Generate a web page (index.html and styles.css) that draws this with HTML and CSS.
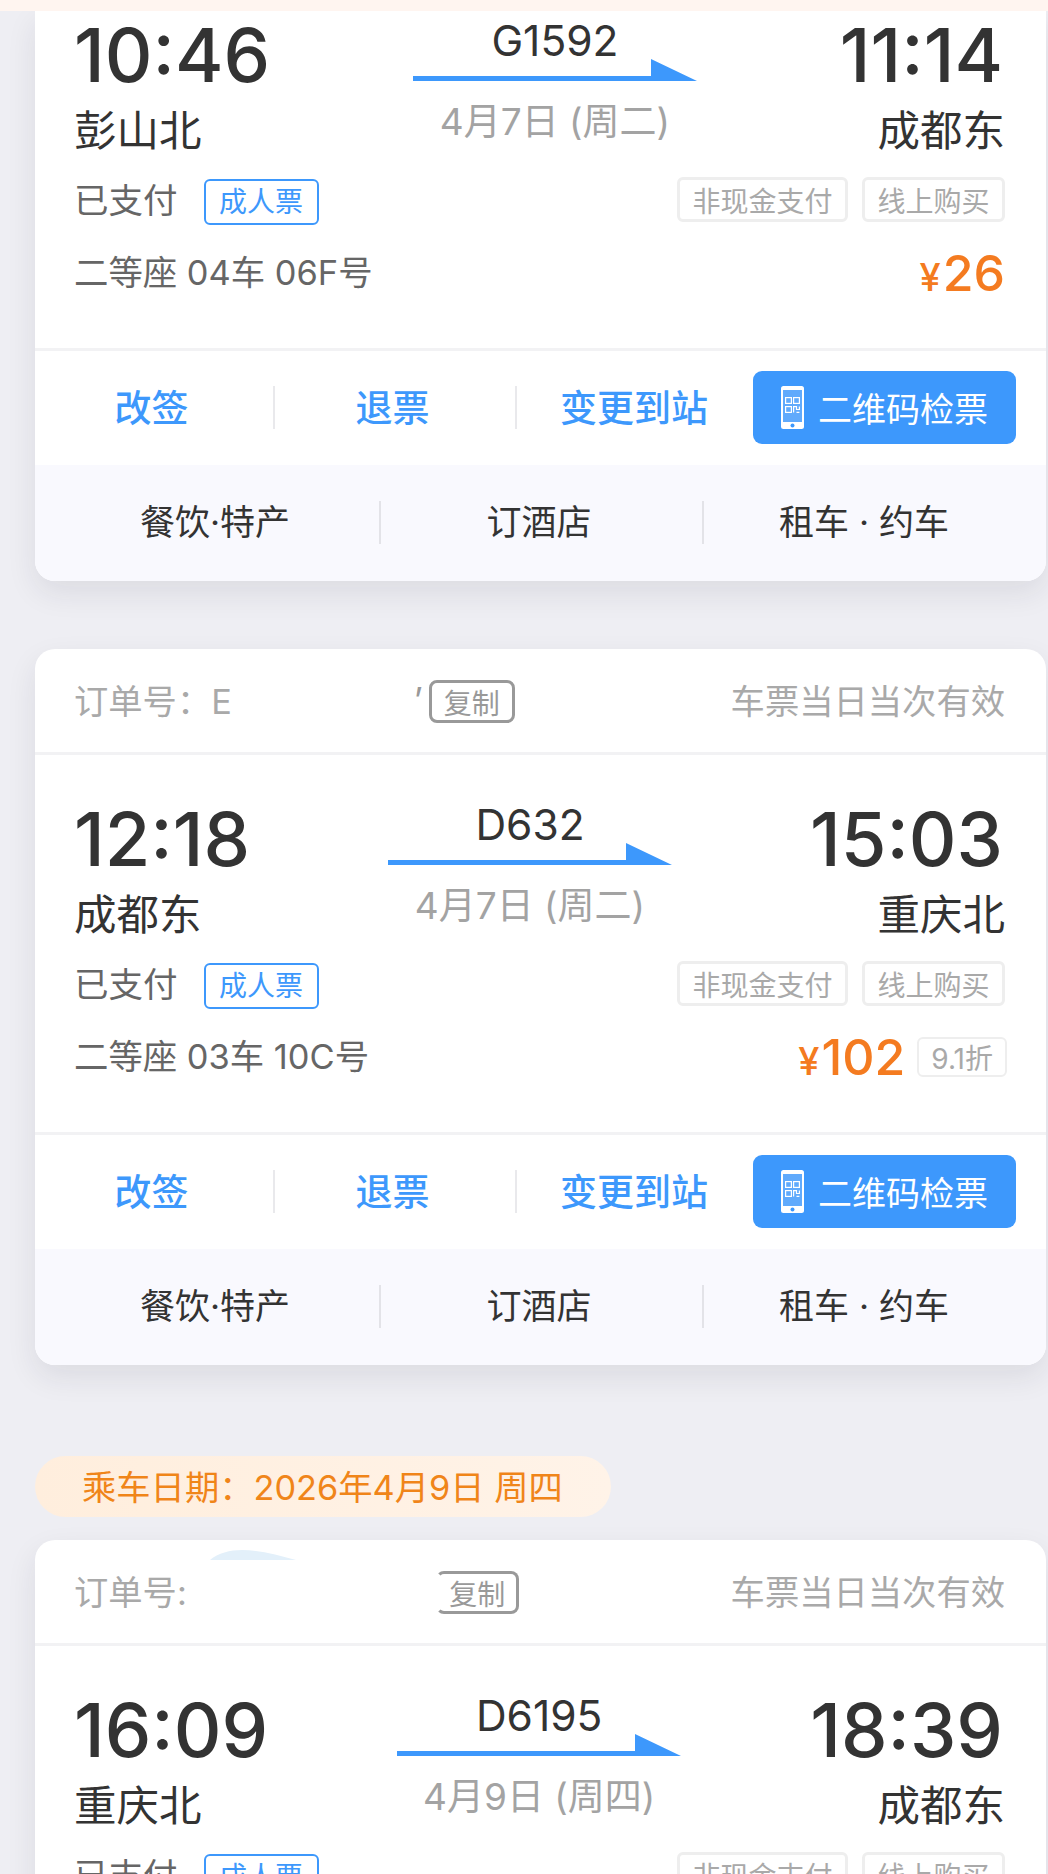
FILE: index.html
```html
<!DOCTYPE html>
<html lang="zh-CN">
<head>
<meta charset="utf-8">
<title>车票订单</title>
<link rel="stylesheet" href="styles.css">
</head>
<body>
<svg class="defs" width="0" height="0" aria-hidden="true">
  <symbol id="arrow" viewBox="0 0 284 22">
    <path d="M0 17H238V0L284 22H0Z" fill="#3d98fc"/>
  </symbol>
  <symbol id="phone" viewBox="0 0 23 43">
    <rect width="23" height="43" rx="2.5" fill="#fff"/>
    <rect x="2" y="4" width="19" height="32" fill="#3d98fc"/>
    <rect x="2" y="4" width="19" height="32" fill="#fff" opacity=".18"/>
    <g fill="none" stroke="#fff" stroke-width="1.2">
      <rect x="4.6" y="11.6" width="5.8" height="5.8"/>
      <rect x="12.6" y="11.6" width="5.8" height="5.8"/>
      <rect x="4.6" y="20.6" width="5.8" height="5.8"/>
      <path d="M12.6 26.4V20.6H15.5V23.5H18.4V20.6M15.5 26.4H18.4"/>
    </g>
    <circle cx="11.5" cy="39.5" r="2" fill="#3d98fc"/>
  </symbol>
</svg>
<div class="topband"></div>
<main class="page">

  <section class="card card-first">
    <div class="body body-first">
      <div class="route">
        <div class="stop"><div class="time">10:46</div><div class="station">彭山北</div></div>
        <div class="trip">
          <div class="train">G1592</div>
          <svg class="arrow"><use href="#arrow"/></svg>
          <div class="date">4月7日 (周二)</div>
        </div>
        <div class="stop stop-end"><div class="time">11:14</div><div class="station">成都东</div></div>
      </div>
      <div class="status">
        <div class="paid"><span>已支付</span><span class="ticket-type">成人票</span></div>
        <div class="tags"><span class="tag">非现金支付</span><span class="tag">线上购买</span></div>
      </div>
      <div class="seat-row">
        <div class="seat">二等座 04车 06F号</div>
        <div class="price"><span class="yen">¥</span><span class="amount">26</span></div>
      </div>
    </div>
    <div class="actions">
      <a class="action">改签</a>
      <a class="action">退票</a>
      <a class="action action-last">变更到站</a>
      <a class="qr"><svg class="qr-icon"><use href="#phone"/></svg>二维码检票</a>
    </div>
    <div class="services">
      <a class="service">餐饮·特产</a>
      <a class="service">订酒店</a>
      <a class="service">租车 · 约车</a>
    </div>
  </section>

  <section class="card card-next">
    <header class="order">
      <div class="order-left">
        <span>订单号：E</span>
        <span class="order-tail">’</span>
        <span class="copy">复制</span>
      </div>
      <span>车票当日当次有效</span>
    </header>
    <div class="body">
      <div class="route">
        <div class="stop"><div class="time">12:18</div><div class="station">成都东</div></div>
        <div class="trip">
          <div class="train">D632</div>
          <svg class="arrow"><use href="#arrow"/></svg>
          <div class="date">4月7日 (周二)</div>
        </div>
        <div class="stop stop-end"><div class="time">15:03</div><div class="station">重庆北</div></div>
      </div>
      <div class="status">
        <div class="paid"><span>已支付</span><span class="ticket-type">成人票</span></div>
        <div class="tags"><span class="tag">非现金支付</span><span class="tag">线上购买</span></div>
      </div>
      <div class="seat-row">
        <div class="seat">二等座 03车 10C号</div>
        <div class="price"><span class="yen">¥</span><span class="amount">102</span><span class="discount">9.1折</span></div>
      </div>
    </div>
    <div class="actions">
      <a class="action">改签</a>
      <a class="action">退票</a>
      <a class="action action-last">变更到站</a>
      <a class="qr"><svg class="qr-icon"><use href="#phone"/></svg>二维码检票</a>
    </div>
    <div class="services">
      <a class="service">餐饮·特产</a>
      <a class="service">订酒店</a>
      <a class="service">租车 · 约车</a>
    </div>
  </section>

  <div class="ride-date">乘车日期：2026年4月9日 周四</div>

  <section class="card card-last">
    <svg class="blot" viewBox="0 0 86 10" aria-hidden="true"><path d="M0 10C8 3 20 0 32 0C50 0 68 5 86 10Z" fill="#e3f0fa"/></svg>
    <header class="order">
      <div class="order-left">
        <span>订单号:</span>
        <span class="copy copy-cut">复制</span>
      </div>
      <span>车票当日当次有效</span>
    </header>
    <div class="body">
      <div class="route">
        <div class="stop"><div class="time">16:09</div><div class="station">重庆北</div></div>
        <div class="trip">
          <div class="train">D6195</div>
          <svg class="arrow"><use href="#arrow"/></svg>
          <div class="date">4月9日 (周四)</div>
        </div>
        <div class="stop stop-end"><div class="time">18:39</div><div class="station">成都东</div></div>
      </div>
      <div class="status">
        <div class="paid"><span>已支付</span><span class="ticket-type">成人票</span></div>
        <div class="tags"><span class="tag">非现金支付</span><span class="tag">线上购买</span></div>
      </div>
    </div>
  </section>

</main>
</body>
</html>
```

FILE: styles.css
```css
* { box-sizing: border-box; }
html, body { margin: 0; height: 1874px; overflow: hidden; }
body {
  background: #eeeef3;
  font-family: Inter, "Noto Sans CJK SC", sans-serif;
  color: #333;
}
.defs { position: absolute; }
.topband { height: 11px; background: #fff5f0; position: relative; z-index: 1; }
.page { padding: 0 2px 0 35px; }

.card {
  position: relative;
  background: #fff;
  border-radius: 20px;
  overflow: hidden;
  box-shadow: 0 12px 30px rgba(30, 30, 60, .09);
}
.card-first { border-radius: 0 0 20px 20px; }
.card-next { margin-top: 68px; }
.card-last { margin-top: 23px; }

.order {
  height: 106px;
  padding: 0 41px 3px 39px;
  border-bottom: 3px solid #f2f2f4;
  display: flex;
  align-items: center;
  justify-content: space-between;
  font-size: 34.3px;
  color: #a9a9a9;
}
.order-left { display: flex; align-items: center; }
.order-tail { margin-left: 182px; margin-right: 6px; color: #999; }
.copy {
  width: 86px;
  height: 43px;
  margin-top: 5px;
  border: 3px solid #999;
  border-radius: 8px;
  display: flex;
  align-items: center;
  justify-content: center;
  font-size: 28px;
  color: #999;
}
.copy-cut { width: 83px; margin-left: 249px; border-left-color: transparent; }
.blot { position: absolute; left: 175px; top: 10px; width: 86px; height: 10px; }

.body {
  padding: 46px 41px 50px 39px;
  border-bottom: 3px solid #f2f2f4;
}
.body-first { padding-top: 6px; }

.route { display: flex; justify-content: space-between; align-items: flex-start; }
.stop { display: flex; flex-direction: column; }
.stop-end { align-items: flex-end; }
.time { font-size: 74px; line-height: 76px; margin-bottom: 13px; font-weight: 500; color: #333; }
.stop-end .time { margin-right: 2px; }
.station { font-size: 42.5px; line-height: 50px; color: #333; }
.trip { display: flex; flex-direction: column; align-items: center; margin-top: -1px; }
.train { font-size: 42.5px; line-height: 50px; color: #333; }
.arrow { display: block; width: 284px; height: 22px; margin-top: -7px; }
.date { margin-top: 18px; font-size: 37px; line-height: 46px; color: #a3a3a3; }

.status {
  margin-top: 21px;
  height: 48px;
  display: flex;
  justify-content: space-between;
  align-items: flex-start;
}
.paid { display: flex; align-items: center; gap: 26px; font-size: 34.5px; line-height: 46px; color: #666; }
.ticket-type {
  margin-top: 2px;
  width: 115px;
  height: 46px;
  border: 2.5px solid #3d98fc;
  border-radius: 6px;
  display: flex;
  align-items: center;
  justify-content: center;
  font-size: 28px;
  color: #3d98fc;
}
.tags { display: flex; gap: 14px; }
.tag, .discount {
  height: 45px;
  padding: 0 12.5px;
  border: 3px solid #eeeeee;
  border-radius: 6px;
  display: flex;
  align-items: center;
  font-size: 28px;
  color: #a9a9a9;
}

.seat-row {
  margin-top: 23px;
  height: 50px;
  display: flex;
  justify-content: space-between;
  align-items: center;
}
.seat { font-size: 34.4px; line-height: 50px; color: #666; }
.price { display: flex; align-items: center; color: #f47b20; font-weight: 500; }
.yen { font-size: 38px; line-height: 50px; margin-top: 8px; margin-right: 2px; }
.amount { font-size: 50px; line-height: 50px; }
.discount { height: 40px; margin-left: 12px; margin-right: -2px; padding: 0 12px; border-width: 2px; font-weight: 400; }

.actions {
  height: 114px;
  padding-bottom: 2px;
  display: grid;
  grid-template-columns: 240px 242px 236px 263px;
  align-items: center;
}
.action {
  height: 43px;
  padding: 0 5px 2px 0;
  border-right: 2px solid #e9e9ec;
  display: flex;
  align-items: center;
  justify-content: center;
  font-size: 37px;
  font-weight: 500;
  color: #3d98fc;
}
.action-last { border-right: 0; padding-right: 2px; }
.qr {
  height: 73px;
  border-radius: 9px;
  background: #3d98fc;
  display: flex;
  align-items: center;
  justify-content: center;
  gap: 14px;
  font-size: 34px;
  color: #fff;
}
.qr-icon { width: 23px; height: 43px; flex: none; }

.services {
  height: 116px;
  padding: 0 0 2px 26px;
  background: #f9f9fe;
  display: grid;
  grid-template-columns: 320px 323px 320px;
  align-items: center;
}
.service {
  height: 43px;
  padding-bottom: 5px;
  display: flex;
  align-items: center;
  justify-content: center;
  font-size: 35px;
  color: #333;
  border-right: 2px solid #e3e3e8;
}
.service:first-child { padding-right: 10px; }
.service:nth-child(2) { padding-right: 5px; }
.service:last-child { border-right: 0; }

.ride-date {
  margin-top: 91px;
  width: 576px;
  height: 61px;
  padding: 0 0 3px 47px;
  border-radius: 31px;
  background: linear-gradient(90deg, #ffeedd, #fff3e8);
  display: flex;
  align-items: center;
  font-size: 34.3px;
  color: #f08519;
}
```
